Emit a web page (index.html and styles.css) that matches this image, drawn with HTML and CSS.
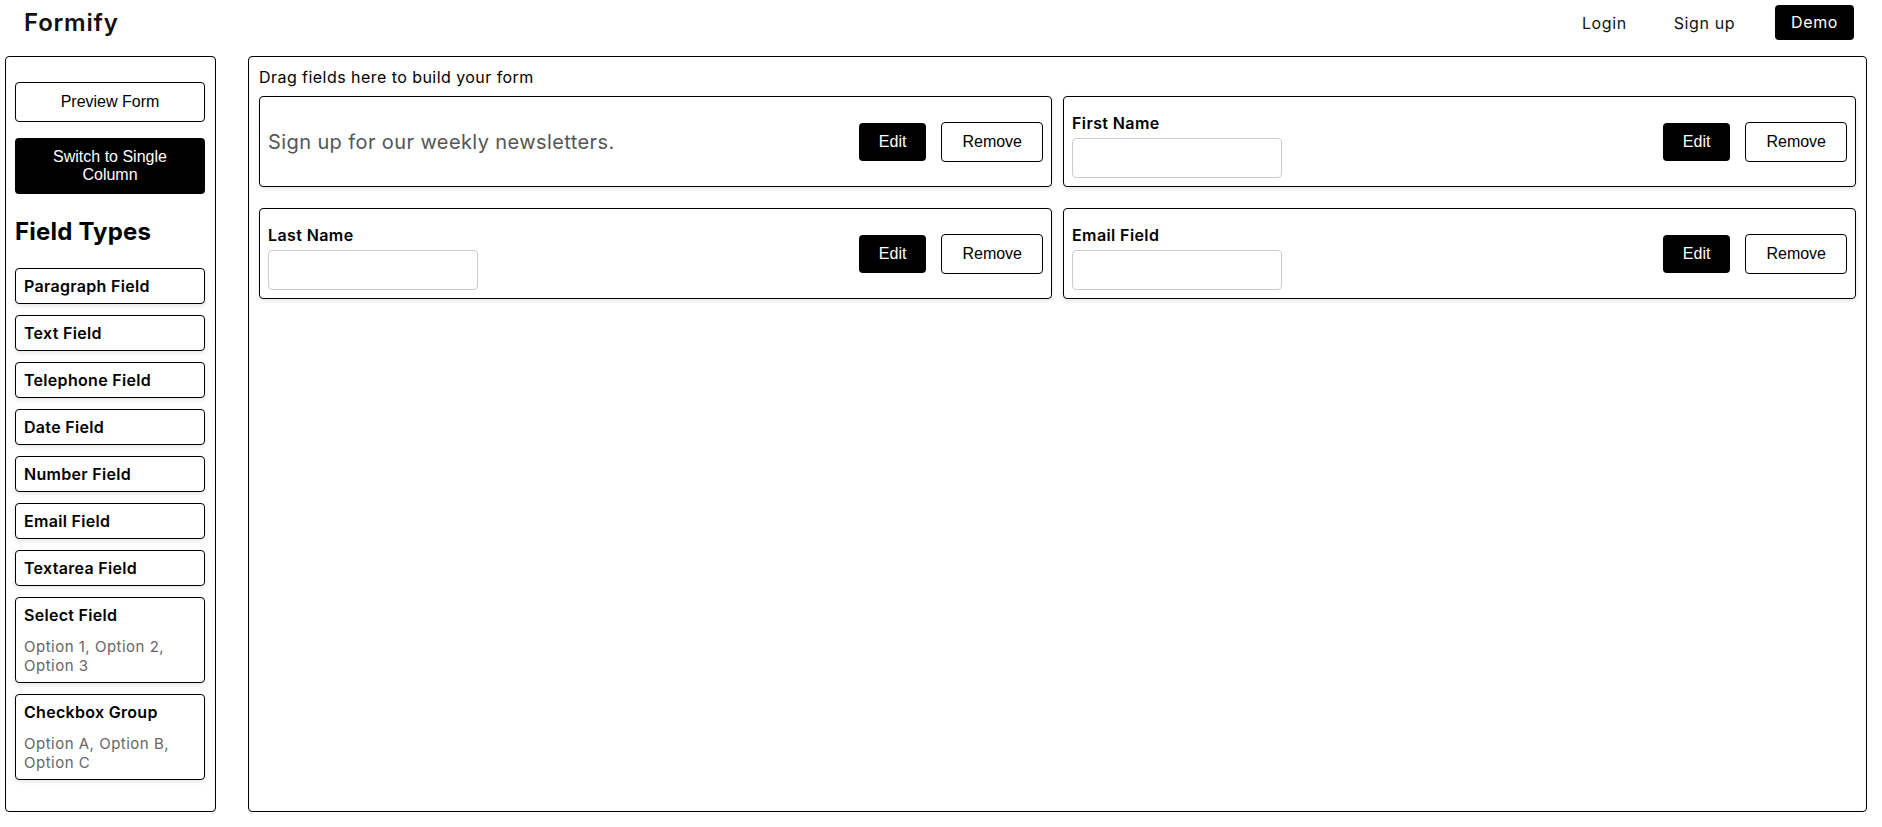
FILE: index.html
```html
<!DOCTYPE html>
<html lang="en">
<head>
<meta charset="utf-8">
<title>Formify</title>
<link rel="stylesheet" href="styles.css">
</head>
<body>
<header class="topbar">
  <div class="brand">Formify</div>
  <nav class="nav">
    <a class="nav-link">Login</a>
    <a class="nav-link">Sign up</a>
    <a class="nav-demo">Demo</a>
  </nav>
</header>
<div class="workspace">
  <aside class="sidebar">
    <button class="btn btn-outline btn-block">Preview Form</button>
    <button class="btn btn-dark btn-block btn-switch">Switch to Single Column</button>
    <h2 class="side-title">Field Types</h2>
    <div class="field-list">
      <div class="field-type"><div class="field-type-name">Paragraph Field</div></div>
      <div class="field-type"><div class="field-type-name">Text Field</div></div>
      <div class="field-type"><div class="field-type-name">Telephone Field</div></div>
      <div class="field-type"><div class="field-type-name">Date Field</div></div>
      <div class="field-type"><div class="field-type-name">Number Field</div></div>
      <div class="field-type"><div class="field-type-name">Email Field</div></div>
      <div class="field-type"><div class="field-type-name">Textarea Field</div></div>
      <div class="field-type"><div class="field-type-name">Select Field</div><p class="field-type-opts">Option 1, Option 2, Option 3</p></div>
      <div class="field-type"><div class="field-type-name">Checkbox Group</div><p class="field-type-opts">Option A, Option B, Option C</p></div>
    </div>
  </aside>
  <main class="canvas">
    <div class="canvas-hint">Drag fields here to build your form</div>
    <div class="form-grid">
      <div class="form-card">
        <div class="card-body"><p class="para-text">Sign up for our weekly newsletters.</p></div>
        <div class="card-actions"><button class="btn btn-dark btn-edit">Edit</button><button class="btn btn-outline">Remove</button></div>
      </div>
      <div class="form-card">
        <div class="card-body"><label class="field-label">First Name</label><input class="field-input" type="text"></div>
        <div class="card-actions"><button class="btn btn-dark btn-edit">Edit</button><button class="btn btn-outline">Remove</button></div>
      </div>
      <div class="form-card">
        <div class="card-body"><label class="field-label">Last Name</label><input class="field-input" type="text"></div>
        <div class="card-actions"><button class="btn btn-dark btn-edit">Edit</button><button class="btn btn-outline">Remove</button></div>
      </div>
      <div class="form-card">
        <div class="card-body"><label class="field-label">Email Field</label><input class="field-input" type="email"></div>
        <div class="card-actions"><button class="btn btn-dark btn-edit">Edit</button><button class="btn btn-outline">Remove</button></div>
      </div>
    </div>
  </main>
</div>
</body>
</html>
```
FILE: styles.css
```css
* { box-sizing: border-box; }
html, body { height: 100%; }
body {
  margin: 0;
  display: flex;
  flex-direction: column;
  font-family: "Inter", "Noto Sans", sans-serif;
  color: #000;
  background: #fff;
}
.topbar {
  height: 45px;
  flex: none;
  display: flex;
  align-items: center;
  justify-content: space-between;
  padding: 0 28px 0 24px;
}
.brand {
  font-size: 24px;
  font-weight: 600;
  letter-spacing: 0.8px;
  color: #111;
}
.nav { display: flex; align-items: center; }
.nav-link {
  font-size: 16px;
  letter-spacing: 0.6px;
  color: #111;
  margin-right: 47px;
}
.nav-link + .nav-link { margin-right: 40px; }
.nav-demo {
  background: #000;
  color: #fff;
  font-size: 16px;
  letter-spacing: 0.6px;
  height: 35px;
  line-height: 35px;
  padding: 0 16px;
  border-radius: 4px;
}
.workspace {
  flex: 1;
  display: flex;
  gap: 32px;
  padding: 11px 15px 15px 5px;
  min-height: 0;
}
.sidebar {
  width: 211px;
  flex: none;
  border: 1px solid #000;
  border-radius: 4px;
  padding: 25px 10px 30px 9px;
}
.btn {
  font-family: "Liberation Sans", Arial, sans-serif;
  font-size: 16px;
  line-height: 18px;
  border-radius: 4px;
  cursor: pointer;
  padding: 10px 20px;
}
.btn-outline { background: #fff; color: #000; border: 1px solid #000; }
.btn-dark { background: #000; color: #fff; border: none; }
.btn-block { display: block; width: 100%; }
.btn-block.btn-outline { padding: 10px 20px; height: 40px; }
.btn-switch { margin-top: 16px; height: 56px; padding: 10px 20px; }
.side-title {
  font-size: 24px;
  line-height: 29px;
  font-weight: 700;
  margin: 23px 0 22px;
  letter-spacing: 0.2px;
}
.field-list { display: flex; flex-direction: column; gap: 11px; }
.field-type {
  border: 1px solid #000;
  border-radius: 4px;
  padding: 7px 8px;
  box-shadow: 0 2px 4px rgba(0,0,0,0.1);
}
.field-type-name {
  font-size: 16px;
  font-weight: 600;
  line-height: 20px;
  letter-spacing: 0.3px;
}
.field-type-opts {
  margin: 13px 0 0;
  font-size: 15px;
  line-height: 18.5px;
  letter-spacing: 0.5px;
  color: #666;
}
.canvas {
  flex: 1;
  border: 1px solid #000;
  border-radius: 4px;
  padding: 10px 10px 10px 10px;
}
.canvas-hint {
  font-size: 16px;
  line-height: 20px;
  letter-spacing: 0.45px;
  margin-bottom: 9px;
}
.form-grid {
  display: grid;
  grid-template-columns: 1fr 1fr;
  column-gap: 11px;
  row-gap: 21px;
}
.form-card {
  display: flex;
  align-items: center;
  justify-content: space-between;
  border: 1px solid #000;
  border-radius: 4px;
  padding: 8px;
  min-height: 90px;
  box-shadow: 0 2px 4px rgba(0,0,0,0.1);
}
.card-body { display: flex; flex-direction: column; }
.para-text {
  margin: 0;
  font-size: 20px;
  line-height: 24px;
  letter-spacing: 0.4px;
  color: #555;
}
.field-label {
  font-size: 16px;
  font-weight: 600;
  line-height: 20px;
  letter-spacing: 0.4px;
  margin: 8px 0 5px;
}
.field-input {
  width: 210px;
  height: 40px;
  border: 1px solid #ccc;
  border-radius: 4px;
  padding: 8px;
  font-size: 16px;
}
.card-actions { display: flex; align-items: center; gap: 15px; }
.btn-edit { height: 38px; padding: 10px 20px; }
.card-actions .btn-outline { height: 40px; }
```
